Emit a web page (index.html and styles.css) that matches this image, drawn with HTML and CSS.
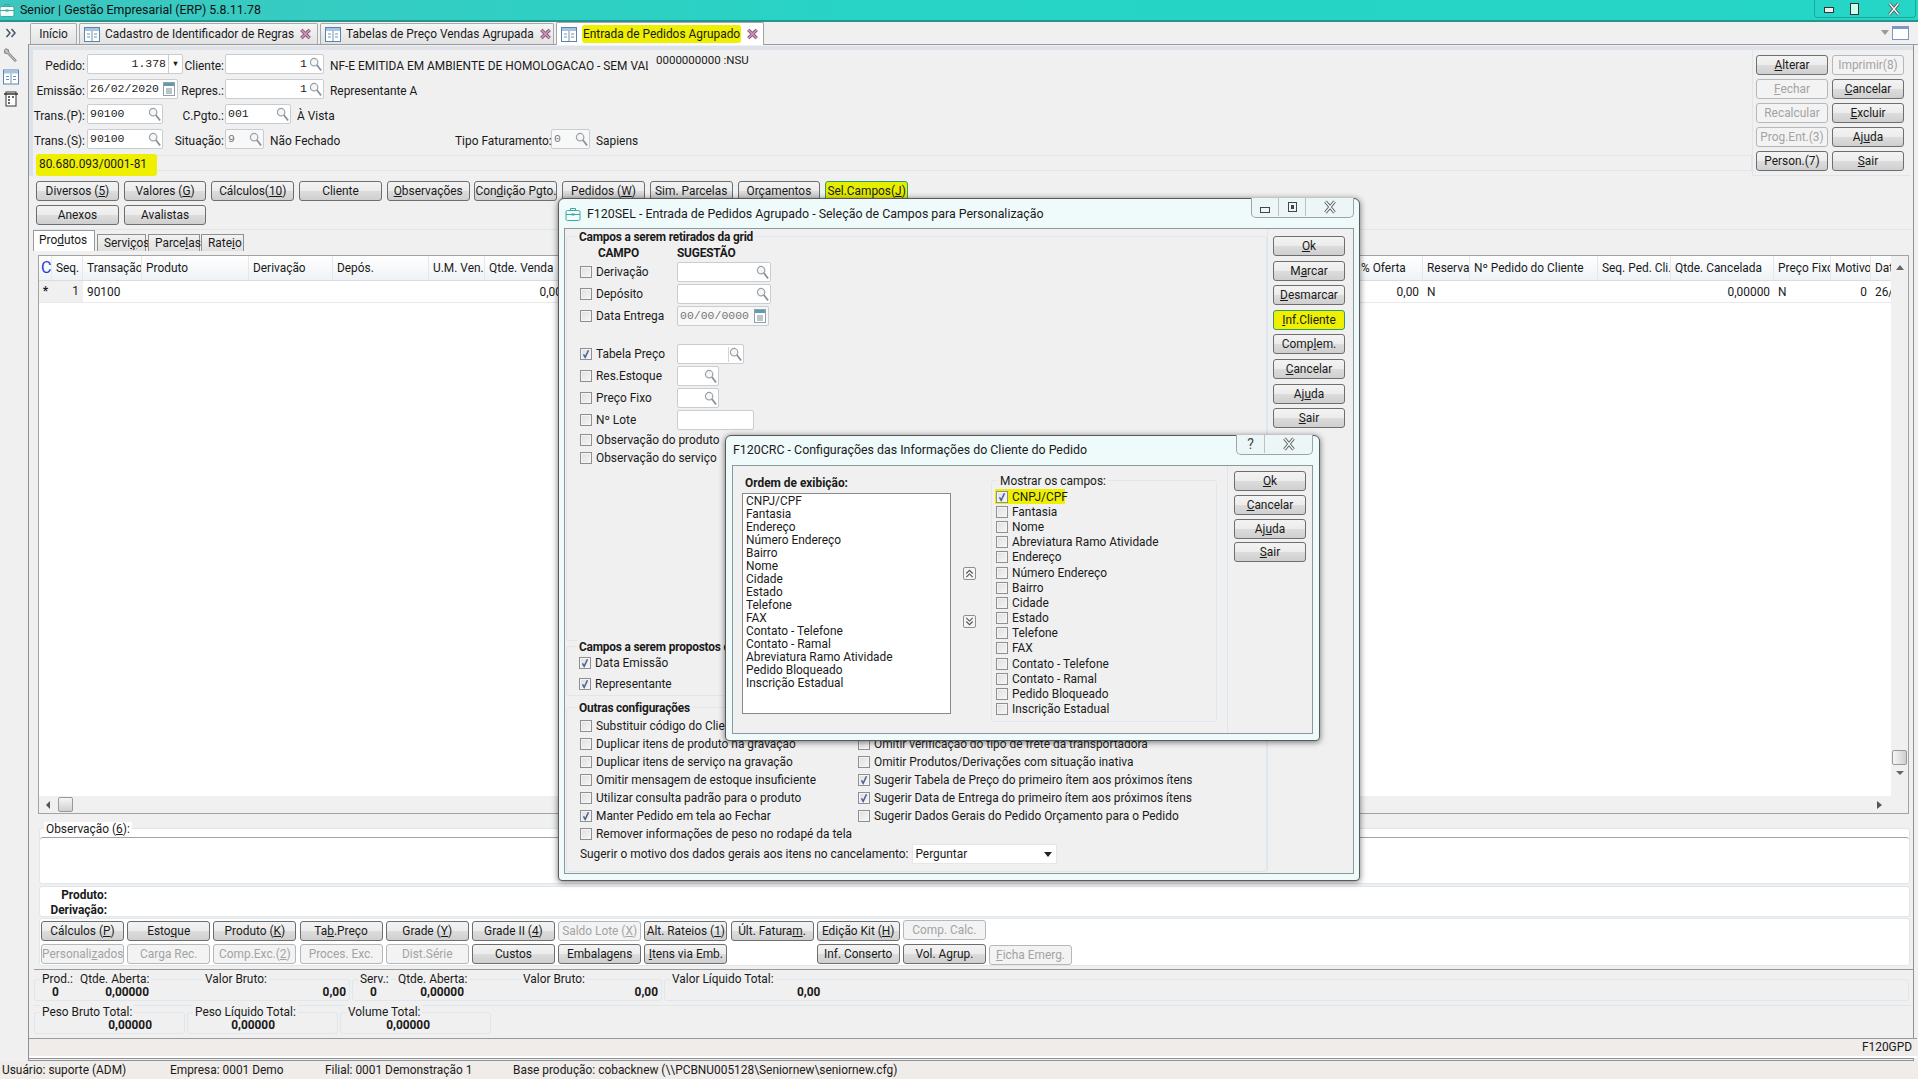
FILE: index.html
```html
<!DOCTYPE html>
<html lang="pt-BR">
<head>
  <meta charset="UTF-8" />
  <title>Senior | Gestão Empresarial (ERP) 5.8.11.78</title>
  <link rel="stylesheet" href="styles.css">
</head>
<body>

  <!-- shared icons -->
  <svg class="defs" width="0" height="0">
    <symbol id="i-search" viewBox="0 0 14 16">
      <circle cx="5.5" cy="5.5" r="4" fill="#f4f6f8" stroke="#9aa3a8" stroke-width="1.3"/>
      <path d="M8.5 8.5l4.5 6" stroke="#8a9297" stroke-width="2" fill="none"/>
    </symbol>
    <symbol id="i-cal" viewBox="0 0 12 14">
      <rect x=".5" y=".5" width="11" height="13" fill="#fff" stroke="#8fa3ad"/>
      <rect x="1" y="1" width="10" height="3" fill="#5f9cb0"/>
      <path d="M3 7h6M3 9h6M3 11h6" stroke="#7d8a90"/>
    </symbol>
    <symbol id="i-check" viewBox="0 0 12 12">
      <path d="M3 6.5l2 3.5 4-8.500" fill="none" stroke="#4a5f97" stroke-width="1.800"/>
    </symbol>
    <symbol id="i-close" viewBox="0 0 14 14">
      <path d="M2.500 2.500l9 9M11.500 2.500l-9 9" stroke="#6d5570" stroke-width="3.600" fill="none"/>
      <path d="M2.500 2.500l9 9M11.500 2.500l-9 9" stroke="#d58db5" stroke-width="1.800" fill="none"/>
    </symbol>
    <symbol id="i-x" viewBox="0 0 14 14">
      <path d="M2.500 1.500l9 11M11.500 1.500l-9 11" stroke="#555" stroke-width="3.200" fill="none"/>
      <path d="M2.500 1.500l9 11M11.500 1.500l-9 11" stroke="#f4f8f8" stroke-width="1.400" fill="none"/>
    </symbol>
    <symbol id="i-case" viewBox="0 0 16 14">
      <rect x="1" y="3.500" width="14" height="10" rx="1.500" fill="#f2fbfa" stroke="#3fa89c"/>
      <path d="M5.500 3.500V1.500h5v2M1 7.500h14" fill="none" stroke="#3fa89c"/>
      <rect x="6.500" y="6.500" width="3" height="2" fill="#3fa89c"/>
    </symbol>
    <symbol id="i-doc" viewBox="0 0 16 15">
      <rect x=".5" y=".5" width="15" height="14" fill="#fff" stroke="#5b84ad"/>
      <rect x="1" y="1" width="14" height="3" fill="#a6c4e0"/>
      <path d="M8 4v10M3 7h3M3 10h3M10 7h3M10 10h3" stroke="#6f90b3"/>
    </symbol>
  </svg>

  <header class="titlebar">
    <svg class="title-icon"><use href="#i-case"/></svg>
    <span class="title-text">Senior | Gestão Empresarial (ERP) 5.8.11.78</span>
    <div class="winbtns">
      <span class="wb-min"></span>
      <span class="wb-max"></span>
      <svg class="wb-x"><use href="#i-x"/></svg>
    </div>
  </header>

  <div class="workspace">
    <aside class="rail">
      <svg class="rail-more" viewBox="0 0 12 10"><path d="M1.500 1l3.500 4-3.500 4M6.500 1l3.500 4-3.500 4" fill="none" stroke="#44546a" stroke-width="1.500"/></svg>
      <svg class="rail-ico" viewBox="0 0 18 18"><path d="M3 2l3 1 .5 3L15 15l-1.500 1.500L5 7.500 2 7 1.500 4z" fill="#b9bfc3" stroke="#777"/></svg>
      <svg class="rail-ico"><use href="#i-doc"/></svg>
      <svg class="rail-ico" viewBox="0 0 16 16"><rect x="3" y="1" width="10" height="14" fill="#fff" stroke="#333"/><path d="M1 3h14M5 6h2M9 6h2M5 9h2M5 12h2" stroke="#333" stroke-width="1.400"/></svg>
    </aside>

    <div class="content">
      <nav class="tabs">
        <div class="tab tab-home">Início</div>
        <div class="tab tab-a"><svg class="tab-ico"><use href="#i-doc"/></svg><span>Cadastro de Identificador de Regras</span><svg class="tab-x"><use href="#i-close"/></svg></div>
        <div class="tab tab-b"><svg class="tab-ico"><use href="#i-doc"/></svg><span>Tabelas de Preço Vendas Agrupada</span><svg class="tab-x"><use href="#i-close"/></svg></div>
        <div class="tab tab-c active"><svg class="tab-ico"><use href="#i-doc"/></svg><span class="mark">Entrada de Pedidos Agrupado</span><svg class="tab-x"><use href="#i-close"/></svg></div>
        <div class="tab-tools"><span class="tool-arrow"></span><span class="tool-box"></span></div>
      </nav>

      <main class="panel">
        <section class="head">
          <div class="head-form">
            <div class="frow">
              <span class="l1">Pedido:</span>
              <div class="split">
                <div class="field w96 num"><span class="val right">1.378</span><span class="spin">▾</span></div>
                <span class="l2">Cliente:</span>
              </div>
              <div class="field w99 num"><span class="val right">1</span><svg class="lens"><use href="#i-search"/></svg></div>
              <span class="desc desc-nf">NF-E EMITIDA EM AMBIENTE DE HOMOLOGACAO - SEM VALOR</span>
              <span class="nsu">0000000000 :NSU</span>
            </div>
            <div class="frow">
              <span class="l1">Emissão:</span>
              <div class="split">
                <div class="field w91 num"><span class="val">26/02/2020</span><svg class="cal"><use href="#i-cal"/></svg></div>
                <span class="l2">Repres.:</span>
              </div>
              <div class="field w99 num"><span class="val right">1</span><svg class="lens"><use href="#i-search"/></svg></div>
              <span class="desc">Representante A</span>
            </div>
            <div class="frow">
              <span class="l1">Trans.(P):</span>
              <div class="split">
                <div class="field w76 num"><span class="val">90100</span><svg class="lens"><use href="#i-search"/></svg></div>
                <span class="l2">C.Pgto.:</span>
              </div>
              <div class="field w66 num"><span class="val">001</span><svg class="lens"><use href="#i-search"/></svg></div>
              <span class="desc">À Vista</span>
            </div>
            <div class="frow">
              <span class="l1">Trans.(S):</span>
              <div class="split">
                <div class="field w76 num"><span class="val">90100</span><svg class="lens"><use href="#i-search"/></svg></div>
                <span class="l2">Situação:</span>
              </div>
              <div class="field w39 num dim"><span class="val">9</span><svg class="lens"><use href="#i-search"/></svg></div>
              <span class="desc desc-sit">Não Fechado</span>
              <span class="tipo">Tipo Faturamento:</span>
              <div class="field w39 num dim"><span class="val">0</span><svg class="lens"><use href="#i-search"/></svg></div>
              <span class="desc">Sapiens</span>
            </div>
            <div class="cnpj-bar"><span class="mark cnpj">80.680.093/0001-81</span></div>
          </div>
          <div class="head-btns">
            <button class="btn"><u>A</u>lterar</button>
            <button class="btn off">Imprimir(8)</button>
            <button class="btn off"><u>F</u>echar</button>
            <button class="btn"><u>C</u>ancelar</button>
            <button class="btn off">Recalcular</button>
            <button class="btn"><u>E</u>xcluir</button>
            <button class="btn off">Prog.Ent.(3)</button>
            <button class="btn">Aj<u>u</u>da</button>
            <button class="btn">Person.(7)</button>
            <button class="btn"><u>S</u>air</button>
          </div>
        </section>

        <section class="actions">
          <div class="action-row">
            <button class="btn">Diversos (<u>5</u>)</button>
            <button class="btn">Valores (<u>G</u>)</button>
            <button class="btn">Cálculos(<u>10</u>)</button>
            <button class="btn">Cliente</button>
            <button class="btn"><u>O</u>bservações</button>
            <button class="btn">Con<u>d</u>ição Pgto.</button>
            <button class="btn">Pedidos (<u>W</u>)</button>
            <button class="btn">Sim. Parcelas</button>
            <button class="btn">Orçamentos</button>
            <button class="btn hot">Sel.Campos(<u>J</u>)</button>
          </div>
          <div class="action-row">
            <button class="btn">Anexos</button>
            <button class="btn">Avalistas</button>
          </div>
        </section>

        <div class="subtabs">
          <span class="subtab active">Pro<u>d</u>utos</span>
          <span class="subtab s2">Servi<u>ç</u>os</span>
          <span class="subtab s3">Parce<u>l</u>as</span>
          <span class="subtab s4">Rate<u>i</u>o</span>
        </div>

        <section class="grid">
          <div class="grid-top">
            <div class="table">
              <div class="trow thead">
                <span class="cc">C</span><span>Seq.</span><span>Transação</span><span>Produto</span><span>Derivação</span><span>Depós.</span><span>U.M. Ven.</span><span>Qtde. Venda</span><span></span><span>% Oferta</span><span>Reserva</span><span>Nº Pedido do Cliente</span><span>Seq. Ped. Cli.</span><span>Qtde. Cancelada</span><span>Preço Fixo</span><span>Motivo</span><span>Dat</span>
              </div>
              <div class="trow tbody">
                <span class="center gray">*</span><span class="r gray">1</span><span>90100</span><span></span><span></span><span></span><span></span><span class="r">0,00000</span><span></span><span class="r">0,00</span><span>N</span><span></span><span></span><span class="r">0,00000</span><span>N</span><span class="r">0</span><span>26/</span>
              </div>
            </div>
            <div class="vscroll">
              <span class="arr-up"></span>
              <span class="vthumb"></span>
              <span class="arr-down"></span>
            </div>
          </div>
          <div class="hscroll">
            <span class="arr-left"></span>
            <span class="hthumb"></span>
            <span class="arr-right"></span>
          </div>
        </section>

        <section class="obs grp-white">
          <div class="legend legend-white">Observação (<u>6</u>):</div>
          <div class="obs-box"></div>
        </section>

        <section class="prod grp-white">
          <div>Produto:</div>
          <div>Derivação:</div>
        </section>

        <section class="toolbar grp-white">
          <button class="btn">Cálculos (<u>P</u>)</button>
          <button class="btn"><span>Esto<u>q</u>ue</span></button>
          <button class="btn">Produto (<u>K</u>)</button>
          <button class="btn">Ta<u>b</u>.Preço</button>
          <button class="btn">Grade (<u>Y</u>)</button>
          <button class="btn">Grade II (<u>4</u>)</button>
          <button class="btn off">Saldo Lote (<u>X</u>)</button>
          <button class="btn">Alt. Rateios (<u>1</u>)</button>
          <button class="btn">Últ. Fatura<u>m</u>.</button>
          <button class="btn">Edição Kit (<u>H</u>)</button>
          <button class="btn off up">Comp. Calc.</button>
          <span></span>
          <button class="btn off">Personali<u>z</u>ados</button>
          <button class="btn off">Carga Rec.</button>
          <button class="btn off">Comp.Exc.(<u>2</u>)</button>
          <button class="btn off">Proces. Exc.</button>
          <button class="btn off">Dist.Série</button>
          <button class="btn">Custos</button>
          <button class="btn">Embalagens</button>
          <button class="btn"><u>I</u>tens via Emb.</button>
          <span></span>
          <button class="btn">Inf. Conserto</button>
          <button class="btn">Vol. Agrup.</button>
          <button class="btn off down"><u>F</u>icha Emerg.</button>
        </section>

        <section class="totals">
          <div class="tbox t-prod">
            <div class="legend">Prod.:</div><div class="legend l-q">Qtde. Aberta:</div><div class="legend l-v">Valor Bruto:</div>
            <b class="tv v-n">0</b><b class="tv v-q">0,00000</b><b class="tv v-b">0,00</b>
          </div>
          <div class="tbox t-serv">
            <div class="legend">Serv.:</div><div class="legend l-q">Qtde. Aberta:</div><div class="legend l-v">Valor Bruto:</div>
            <b class="tv v-n">0</b><b class="tv v-q">0,00000</b><b class="tv v-b">0,00</b>
          </div>
          <div class="tbox t-liq">
            <div class="legend">Valor Líquido Total:</div>
            <b class="tv v-liq">0,00</b>
          </div>
        </section>
        <section class="totals totals2">
          <div class="tbox t-peso"><div class="legend">Peso Bruto Total:</div><b class="tv">0,00000</b></div>
          <div class="tbox t-peso"><div class="legend">Peso Líquido Total:</div><b class="tv">0,00000</b></div>
          <div class="tbox t-peso"><div class="legend">Volume Total:</div><b class="tv">0,00000</b></div>
        </section>

        <div class="form-code">F120GPD</div>
      </main>
    </div>
  </div>

  <footer class="statusbar">
    <span class="s-user">Usuário: suporte (ADM)</span>
    <span class="s-emp">Empresa: 0001 Demo</span>
    <span class="s-fil">Filial: 0001 Demonstração 1</span>
    <span>Base produção: cobacknew (\\PCBNU005128\Seniornew\seniornew.cfg)</span>
  </footer>

  <!-- F120SEL window -->
  <div class="dialog dlg-sel">
    <div class="dlg-title">
      <svg class="title-icon"><use href="#i-case"/></svg>
      <span>F120SEL - Entrada de Pedidos Agrupado - Seleção de Campos para Personalização</span>
      <div class="dlg-btns">
        <span class="db db-min"><i></i></span>
        <span class="db db-max"><i></i></span>
        <span class="db db-x"><svg><use href="#i-x"/></svg></span>
      </div>
    </div>
    <div class="dlg-body">
      <div class="sel-left">
        <div class="grp g-campos">
          <div class="legend bold">Campos a serem retirados da grid</div>
          <div class="campo-head"><b>CAMPO</b><b>SUGESTÃO</b></div>
          <div class="crow"><label class="opt"><span class="chk"></span>Derivação</label><div class="field w94"><svg class="lens"><use href="#i-search"/></svg></div></div>
          <div class="crow"><label class="opt"><span class="chk"></span>Depósito</label><div class="field w94"><svg class="lens"><use href="#i-search"/></svg></div></div>
          <div class="crow"><label class="opt"><span class="chk"></span>Data Entrega</label><div class="field w92 num dim"><span class="val">00/00/0000</span><svg class="cal"><use href="#i-cal"/></svg></div></div>
          <div class="crow gap-top"><label class="opt"><span class="chk on"><svg><use href="#i-check"/></svg></span>Tabela Preço</label><div class="field w67"><span class="val"></span><svg class="lens sep"><use href="#i-search"/></svg></div></div>
          <div class="crow"><label class="opt"><span class="chk"></span>Res.Estoque</label><div class="field w42"><svg class="lens"><use href="#i-search"/></svg></div></div>
          <div class="crow"><label class="opt"><span class="chk"></span>Preço Fixo</label><div class="field w42"><svg class="lens"><use href="#i-search"/></svg></div></div>
          <div class="crow"><label class="opt"><span class="chk"></span>Nº Lote</label><div class="field w77"></div></div>
          <div class="crow short"><label class="opt"><span class="chk"></span>Observação do produto</label></div>
          <div class="crow short"><label class="opt"><span class="chk"></span>Observação do serviço</label></div>
        </div>
        <div class="grp g-prop">
          <div class="legend bold">Campos a serem propostos c</div>
          <div class="prow"><label class="opt"><span class="chk on"><svg><use href="#i-check"/></svg></span>Data Emissão</label></div>
          <div class="prow"><label class="opt"><span class="chk on"><svg><use href="#i-check"/></svg></span>Representante</label></div>
        </div>
        <div class="grp g-outras">
          <div class="legend bold">Outras configurações</div>
          <div class="out-grid">
            <label class="opt"><span class="chk"></span>Substituir código do Clie</label><span></span>
            <label class="opt"><span class="chk"></span>Duplicar itens de produto na gravação</label>
            <label class="opt"><span class="chk"></span>Omitir verificação do tipo de frete da transportadora</label>
            <label class="opt"><span class="chk"></span>Duplicar itens de serviço na gravação</label>
            <label class="opt"><span class="chk"></span>Omitir Produtos/Derivações com situação inativa</label>
            <label class="opt"><span class="chk"></span>Omitir mensagem de estoque insuficiente</label>
            <label class="opt"><span class="chk on"><svg><use href="#i-check"/></svg></span>Sugerir Tabela de Preço do primeiro ítem aos próximos ítens</label>
            <label class="opt"><span class="chk"></span>Utilizar consulta padrão para o produto</label>
            <label class="opt"><span class="chk on"><svg><use href="#i-check"/></svg></span>Sugerir Data de Entrega do primeiro ítem aos próximos ítens</label>
            <label class="opt"><span class="chk on"><svg><use href="#i-check"/></svg></span>Manter Pedido em tela ao Fechar</label>
            <label class="opt"><span class="chk"></span>Sugerir Dados Gerais do Pedido Orçamento para o Pedido</label>
            <label class="opt"><span class="chk"></span>Remover informações de peso no rodapé da tela</label><span></span>
          </div>
          <div class="motivo">
            <span>Sugerir o motivo dos dados gerais aos itens no cancelamento:</span>
            <div class="select"><span>Perguntar</span><i class="caret"></i></div>
          </div>
        </div>
      </div>
      <div class="sel-right">
        <button class="btn"><u>O</u>k</button>
        <button class="btn">M<u>a</u>rcar</button>
        <button class="btn"><u>D</u>esmarcar</button>
        <button class="btn hot2"><u>I</u>nf.Cliente</button>
        <button class="btn">Comp<u>l</u>em.</button>
        <button class="btn"><u>C</u>ancelar</button>
        <button class="btn">Aj<u>u</u>da</button>
        <button class="btn"><u>S</u>air</button>
      </div>
    </div>
  </div>

  <!-- F120CRC window -->
  <div class="dialog dlg-crc">
    <div class="dlg-title crc-title">
      <span>F120CRC - Configurações das Informações do Cliente do Pedido</span>
      <div class="dlg-btns">
        <span class="db db-help">?</span>
        <span class="db db-x"><svg><use href="#i-x"/></svg></span>
      </div>
    </div>
    <div class="dlg-body">
      <div class="crc-left">
        <div class="ordem">
          <b class="ordem-title">Ordem de exibição:</b>
          <div class="listbox">
            <div>CNPJ/CPF</div><div>Fantasia</div><div>Endereço</div><div>Número Endereço</div><div>Bairro</div><div>Nome</div><div>Cidade</div><div>Estado</div><div>Telefone</div><div>FAX</div><div>Contato - Telefone</div><div>Contato - Ramal</div><div>Abreviatura Ramo Atividade</div><div>Pedido Bloqueado</div><div>Inscrição Estadual</div>
          </div>
        </div>
        <div class="movers">
          <span class="mover"><svg viewBox="0 0 12 12"><path d="M2.500 6l3.500-3.500L9.500 6M2.500 10L6 6.500 9.500 10" fill="none" stroke="#555" stroke-width="1.200"/></svg></span>
          <span class="mover"><svg viewBox="0 0 12 12"><path d="M2.500 2l3.500 3.500L9.500 2M2.500 6L6 9.500 9.500 6" fill="none" stroke="#555" stroke-width="1.200"/></svg></span>
        </div>
        <div class="grp g-mostrar">
          <div class="legend">Mostrar os campos:</div>
          <label class="opt hl-opt"><span class="chk on"><svg><use href="#i-check"/></svg></span>CNPJ/CPF</label>
          <label class="opt"><span class="chk"></span>Fantasia</label>
          <label class="opt"><span class="chk"></span>Nome</label>
          <label class="opt"><span class="chk"></span>Abreviatura Ramo Atividade</label>
          <label class="opt"><span class="chk"></span>Endereço</label>
          <label class="opt"><span class="chk"></span>Número Endereço</label>
          <label class="opt"><span class="chk"></span>Bairro</label>
          <label class="opt"><span class="chk"></span>Cidade</label>
          <label class="opt"><span class="chk"></span>Estado</label>
          <label class="opt"><span class="chk"></span>Telefone</label>
          <label class="opt"><span class="chk"></span>FAX</label>
          <label class="opt"><span class="chk"></span>Contato - Telefone</label>
          <label class="opt"><span class="chk"></span>Contato - Ramal</label>
          <label class="opt"><span class="chk"></span>Pedido Bloqueado</label>
          <label class="opt"><span class="chk"></span>Inscrição Estadual</label>
        </div>
      </div>
      <div class="crc-right">
        <button class="btn"><u>O</u>k</button>
        <button class="btn"><u>C</u>ancelar</button>
        <button class="btn">Aj<u>u</u>da</button>
        <button class="btn"><u>S</u>air</button>
      </div>
    </div>
  </div>

</body>
</html>
```

FILE: styles.css
```css
* { margin: 0; padding: 0; box-sizing: border-box; }

body {
  width: 1918px;
  height: 1079px;
  overflow: hidden;
  position: relative;
  display: flex;
  flex-direction: column;
  font-family: Roboto, "Noto Sans", sans-serif;
  font-size: 11.900px;
  line-height: 14px;
  color: #1a1a1a;
  background: #f0f0f0;
}

.defs { position: absolute; }

/* title bar */
.titlebar {
  height: 22px;
  flex: none;
  display: flex;
  align-items: center;
  background: linear-gradient(90deg, #3cc6bf 0%, #34cdc3 20%, #27d4c5 45%, #25d5c5 100%);
  border-bottom: 2px solid #25958d;
  color: #111;
  position: relative;
}

.title-icon { width: 16px; height: 14px; flex: none; }
.titlebar .title-icon { margin: 0 5px 0 -1px; }
.title-text { font-size: 12.400px; }

.winbtns {
  position: absolute;
  top: 0;
  right: 2px;
  width: 102px;
  height: 18px;
  border: 1px solid #1ea79c;
  border-top: 0;
  border-radius: 0 0 4px 4px;
  display: flex;
  align-items: center;
}

.wb-min { width: 10px; height: 6px; margin: 3px 0 0 9px; border: 1px solid #333; background: #eee; }
.wb-max { width: 9px; height: 12px; margin-left: 16px; border: 1px solid #333; background: #cfe; }
.wb-x { width: 14px; height: 14px; margin-left: 28px; }

.workspace { flex: 1; display: flex; min-height: 0; }

.rail {
  width: 28px;
  flex: none;
  display: flex;
  flex-direction: column;
  align-items: flex-start;
  padding-left: 3px;
}

.rail-more { width: 12px; height: 10px; margin: 6px 0 9px 2px; }
.rail-ico { width: 16px; height: 16px; margin-bottom: 6px; }

.content { flex: 1; display: flex; flex-direction: column; min-width: 0; }

/* top tabs */
.tabs {
  height: 23px;
  flex: none;
  display: flex;
  align-items: flex-end;
  padding-left: 2px;
  border-bottom: 1px solid #9a9a9a;
  position: relative;
}

.tab {
  height: 21px;
  display: flex;
  align-items: center;
  gap: 5px;
  margin-right: 2px;
  background: linear-gradient(#f6f6f6, #e2e2e2);
  border: 1px solid #a9a9a9;
  border-bottom: 0;
  border-radius: 2px 2px 0 0;
  padding: 0 6px 0 4px;
  white-space: nowrap;
}

.tab-home { width: 47px; justify-content: center; padding: 0; }
.tab-a { width: 239px; }
.tab-b { width: 234px; }
.tab-c { width: 208px; }

.tab.active {
  height: 23px;
  background: #fff;
  margin-bottom: -1px;
  border-color: #a5a5a5;
}

.tab-ico { width: 16px; height: 15px; flex: none; }
.tab-x { width: 13px; height: 14px; flex: none; margin-left: auto; }

.mark { background: #eef000; border-radius: 3px; }
.tab-c .mark { padding: 2px 1px; }

.tab-tools { margin-left: auto; display: flex; align-items: center; align-self: center; padding-right: 9px; }
.tool-arrow { width: 0; height: 0; border: 4px solid transparent; border-top: 5px solid #999; margin: 3px 3px 0 0; }
.tool-box { width: 17px; height: 14px; background: #fff; border: 1px solid #7d96c8; border-top: 3px solid #7d96c8; }

/* main area */
.panel {
  flex: 1;
  margin-right: 4px;
  border-left: 1px solid #8e9296;
  border-right: 1px solid #8e9296;
  border-bottom: 3px double #8e9296;
  padding: 1px 0 0 4px;
  display: flex;
  flex-direction: column;
  min-height: 0;
}

.head {
  height: 130px;
  flex: none;
  display: flex;
  margin-left: -4px;
  border-top: 4px solid #dde3e8;
  border-left: 4px solid #dde3e8;
}

.head-form { width: 1719px; padding: 4px 0 0 0; display: flex; flex-direction: column; }

.frow { height: 20px; margin-bottom: 5px; display: flex; align-items: center; position: relative; }
.frow span { white-space: nowrap; }

.l1 { width: 53px; padding: 4px 1px 0 0; text-align: right; flex: none; }
.l2 { padding-top: 4px; }
.split { width: 138px; flex: none; display: flex; justify-content: space-between; align-items: center; padding-right: 1px; margin-left: 1px; }

.field {
  height: 20px;
  flex: none;
  display: flex;
  align-items: center;
  background: #fff;
  border: 1px solid #c8cdd1;
  border-radius: 2px;
}

.w96 { width: 96px; }
.w91 { width: 91px; }
.w99 { width: 99px; }
.w76 { width: 76px; }
.w66 { width: 66px; }
.w39 { width: 39px; }
.w94 { width: 94px; }
.w92 { width: 92px; }
.w67 { width: 67px; }
.w42 { width: 42px; }
.w77 { width: 77px; }

.num { font-family: "Liberation Mono", monospace; font-size: 11.500px; }
.num .val { padding-bottom: 1px; }
.dim { color: #777; background: #f8f8f8; }
.val { flex: 1; padding-left: 2px; }
.val.right { text-align: right; padding-right: 2px; }

.spin { width: 14px; text-align: center; border-left: 1px solid #ccc; height: 18px; line-height: 17px; }
.lens { width: 13px; height: 15px; flex: none; margin-left: auto; margin-right: 1px; }
.lens.sep { border-left: 1px solid #d5d5d5; width: 14px; }
.cal { width: 12px; height: 14px; flex: none; margin: 0 2px 0 auto; }

.desc { margin-left: 6px; padding-top: 4px; }
.desc-nf { width: 318px; overflow: hidden; }
.nsu { font-size: 11.500px; margin: -9px 0 0 8px; }
.desc-sit { width: 185px; }
.tipo { width: 95px; text-align: right; margin-right: 1px; padding-top: 4px; }

.cnpj-bar {
  height: 16px;
  margin: 1px 0 0 3px;
  border-top: 1px solid #dfe5ea;
  border-bottom: 1px solid #dfe5ea;
  border-right: 1px solid #dfe5ea;
  display: flex;
  align-items: center;
}
.cnpj { padding: 3px 10px 5px 3px; margin-top: 3px; }

.head-btns {
  width: 158px;
  margin-left: 0;
  display: grid;
  grid-template-columns: 72px 72px;
  grid-auto-rows: 20px;
  gap: 4px 4px;
  padding: 5px 0 0 3px;
  border-left: 1px solid #dfe5ea;
  border-bottom: 1px solid #dfe5ea;
}

.btn {
  height: 20px;
  font: inherit;
  color: #1a1a1a;
  border: 1px solid #6e6e6e;
  border-radius: 3px;
  background: linear-gradient(#f3f3f3 0%, #ececec 48%, #dcdcdc 52%, #cfcfcf 100%);
  white-space: nowrap;
  overflow: hidden;
}
.btn.off { color: #a3a3a3; border-color: #b4b8ba; background: #f3f3f3; }

.actions { height: 54px; flex: none; padding: 5px 0 0 3px; border-bottom: 1px solid #dfe5ea; }
.action-row { display: grid; grid-template-columns: repeat(10, 82.800px); column-gap: 4.900px; margin-bottom: 4px; }
.btn.hot { background: #e6ee00; border-color: #2f9d6a; }

.subtabs { height: 21px; flex: none; display: flex; align-items: flex-end; margin-bottom: 4px; }
.subtab { border: 1px solid #909090; border-bottom: 0; background: linear-gradient(#f2f2f2, #e0e0e0); height: 17px; margin-left: 1px; padding: 1px 0 0 6px; }
.subtab.active { width: 62px; height: 21px; margin: 0 1px 0 0; background: #fff; border-color: #9a9a9a; padding: 2px 0 0 5px; }
.s2 { width: 49px; }
.s3 { width: 52px; margin-left: 2px; }
.s4 { width: 43px; }

/* grid */
.grid {
  height: 559px;
  flex: none;
  margin-left: 5px;
  width: 1871px;
  border: 1px solid #a3a3a3;
  display: flex;
  flex-direction: column;
}

.grid-top { flex: 1; display: flex; min-height: 0; }
.table { flex: 1; background: #fff; min-width: 0; }

.trow {
  display: grid;
  grid-template-columns: 13px 31px 59px 107px 84px 96px 56px 101px 771px 66px 47px 128px 73px 103px 57px 40px 22px;
  overflow: hidden;
}
.trow span { padding-left: 4px; white-space: nowrap; overflow: hidden; }

.thead { height: 25px; align-items: center; background: linear-gradient(#fff, #eff3f6); border-bottom: 1px solid #d8dde1; }
.thead span { height: 24px; line-height: 24px; border-right: 1px solid #e4e8eb; }
.thead .cc { color: #1a3fd8; font-size: 16px; padding-left: 2px; }

.tbody { height: 22px; align-items: center; border-bottom: 1px solid #e9e9e9; }
.tbody .r { text-align: right; padding: 0 4px 0 0; }
.tbody .center { text-align: center; padding: 0; font-weight: 700; }
.tbody .gray { background: #f0f0f0; height: 21px; line-height: 21px; }

.vscroll { width: 17px; flex: none; background: #f0f0f0; position: relative; display: flex; flex-direction: column; align-items: center; }
.arr-up { width: 0; height: 0; margin-top: 9px; border: 4px solid transparent; border-bottom: 5px solid #666; border-top: 0; }
.vthumb { width: 15px; height: 15px; margin-top: auto; margin-bottom: 6px; border: 1px solid #999; border-radius: 2px; background: linear-gradient(90deg, #f6f6f6, #cfcfcf); }
.arr-down { width: 0; height: 0; margin-bottom: 21px; border: 4px solid transparent; border-top: 4px solid #666; border-bottom: 0; }

.hscroll { height: 17px; flex: none; background: #f0f0f0; display: flex; align-items: center; padding: 0 26px 0 7px; }
.arr-left { width: 0; height: 0; border: 4px solid transparent; border-right: 4px solid #555; border-left: 0; }
.hthumb { width: 15px; height: 15px; margin-left: 8px; border: 1px solid #999; border-radius: 2px; background: linear-gradient(#f6f6f6, #cfcfcf); }
.arr-right { width: 0; height: 0; margin-left: auto; border: 4px solid transparent; border-left: 5px solid #555; border-right: 0; }

/* groups */
.legend { display: table; margin: -7px 0 0 6px; padding: 0 2px; background: #f0f0f0; white-space: nowrap; }
.legend.bold { font-weight: 700; letter-spacing: -.2px; }
.legend-white { background: #fff; margin-left: 4px; }

.grp { border: 1px solid #dfe6ec; border-radius: 3px; }

.grp-white { background: #fff; border: 1px solid #dfe6ec; border-radius: 3px; margin-left: 6px; width: 1871px; flex: none; }

.obs { height: 56px; margin-top: 14px; }
.obs-box { height: 47px; margin: 1px 0 0 0; border-top: 1px solid #a3a3a3; border-radius: 3px; }

.prod { height: 31px; margin-top: 2px; font-weight: 700; text-align: right; }
.prod div { width: 67px; height: 14px; margin-top: 1px; }

.toolbar {
  height: 48px;
  margin-top: 1px;
  padding: 2px 0 0 1px;
  display: grid;
  grid-template-columns: repeat(12, 83px);
  column-gap: 3.200px;
  row-gap: 3px;
  grid-auto-rows: 20px;
  border-bottom: 1px solid #dfe6ec;
}
.btn.up { margin-top: -1px; }
.btn.down { margin-top: 1px; }

.totals {
  display: flex;
  flex: none;
  height: 36px;
  margin: 3px 0 0 1px;
  padding-top: 9px;
  border-top: 1px solid #9a9a9a;
  gap: 2px;
}
.totals2 { height: 32px; margin-top: 0; padding-top: 6px; border-top: 1px solid #dfe6ec; }

.tbox { border: 1px solid #dfe6ec; border-radius: 3px; height: 22px; position: relative; }
.totals .tbox .legend { position: absolute; top: -8px; left: 0; margin: 0 0 0 5px; line-height: 14px; }
.totals .tbox .l-q { left: 43px; margin: 0; }
.totals .tbox .l-v { left: 168px; margin: 0; }
.t-prod { width: 316px; }
.t-serv { width: 310px; }
.t-liq { width: 1245px; }
.t-peso { width: 151px; }

.tv { position: absolute; top: 5px; font-weight: 700; }
.v-n { left: 17px; }
.v-q { right: 200px; }
.v-b { right: 3px; }
.t-serv .v-q { right: 197px; }
.v-liq { left: 132px; }
.t-peso .tv { right: 32px; }
.t-peso + .t-peso .tv { right: 62px; }
.t-peso + .t-peso + .t-peso .tv { right: 60px; }

.form-code {
  flex: none;
  margin: 1px -4px 0 -4px;
  height: 20px;
  background: #efecea;
  border-top: 1px solid #9a9a9a;
  border-bottom: 2px solid #fff;
  text-align: right;
  padding-right: 5px;
  line-height: 17px;
}

.statusbar {
  height: 18px;
  flex: none;
  display: flex;
  background: #efecea;
  padding: 1px 0 0 2px;
  line-height: 17px;
}
.s-user { width: 168px; }
.s-emp { width: 155px; }
.s-fil { width: 188px; }

/* dialogs */
.dialog {
  position: absolute;
  background: #effafb;
  border: 1px solid #5a5a5a;
  border-radius: 6px 6px 4px 4px;
  box-shadow: 0 1px 6px rgba(0, 0, 0, .55);
  padding: 0 5px 6px;
  display: flex;
  flex-direction: column;
}

.dlg-sel { left: 558px; top: 198px; width: 802px; height: 683px; }
.dlg-crc { left: 725px; top: 435px; width: 595px; height: 306px; padding: 0 6px 6px; }

.dlg-title {
  height: 29px;
  flex: none;
  display: flex;
  align-items: center;
  gap: 6px;
  font-size: 12.400px;
  position: relative;
  padding-left: 1px;
}

.crc-title { padding-bottom: 2px; }

.dlg-btns {
  position: absolute;
  top: -1px;
  right: 0;
  height: 20px;
  display: flex;
  border: 1px solid #9aa5a9;
  border-top: 0;
  border-radius: 0 0 5px 5px;
  background: #edf6f7;
}

.db { display: flex; align-items: center; justify-content: center; border-right: 1px solid #b9c3c6; height: 18px; }
.db:last-child { border-right: 0; }
.db-min { width: 27px; }
.db-min i { width: 10px; height: 6px; margin-top: 5px; border: 1px solid #444; }
.db-max { width: 27px; }
.db-max i { width: 9px; height: 10px; border: 1px solid #444; box-shadow: inset 0 0 0 2px #edf6f7, inset 0 0 0 4px #444; }
.db-x { width: 47px; }
.db-x svg { width: 14px; height: 14px; }
.db-help { width: 28px; font-size: 14px; color: #444; }
.dlg-crc .db-x { width: 47px; }

.dlg-body {
  flex: 1;
  min-height: 0;
  display: flex;
  background: #f0f0f0;
  border: 1px solid #8d979c;
}

.sel-left { width: 703px; flex: none; padding: 7px 0 0 1px; border-right: 1px solid #dfe6ec; display: flex; flex-direction: column; }

.g-campos { height: 405px; }
.g-campos .legend { margin-left: 10px; }
.campo-head { display: flex; height: 15px; margin-top: 2px; padding-left: 31px; }
.campo-head b { width: 79px; letter-spacing: -.2px; }

.crow { height: 22px; display: flex; align-items: center; padding-left: 13px; }
.crow .opt { width: 97px; flex: none; }
.gap-top { margin-top: 16px; }
.crow.short { height: 18px; }
.crow.short .opt { width: 200px; }

.opt { display: flex; align-items: center; gap: 4px; white-space: nowrap; }

.chk {
  width: 12px;
  height: 12px;
  flex: none;
  border: 1px solid #8d8f90;
  background: linear-gradient(135deg, #dfdfdf, #f6f6f6);
  display: block;
  box-shadow: inset 0 0 0 1px #f4f4f4;
}
.chk svg { width: 10px; height: 10px; display: block; }

.g-prop { height: 50px; margin-top: 5px; padding-left: 12px; }
.g-prop .legend { margin-left: -2px; }
.prow { height: 21px; display: flex; align-items: center; }
.g-prop .legend + .prow { margin-top: -2px; }

.g-outras { flex: 1; margin-top: 11px; margin-bottom: 1px; padding-left: 13px; }
.g-outras .legend { margin-left: -3px; }
.out-grid { display: grid; grid-template-columns: 278px 1fr; grid-auto-rows: 18px; align-items: center; margin-top: 2px; }

.motivo { display: flex; align-items: center; gap: 4px; margin-top: 1px; height: 20px; }
.select { width: 145px; height: 20px; display: flex; align-items: center; justify-content: space-between; background: #fff; border: 1px solid #e6e6e6; padding: 0 4px 0 2px; }
.caret { width: 0; height: 0; border: 4px solid transparent; border-top: 5px solid #222; border-bottom: 0; }

.sel-right { flex: 1; padding: 7px 0 0 5px; display: flex; flex-direction: column; gap: 4.600px; align-items: flex-start; }
.sel-right .btn, .crc-right .btn { width: 72px; flex: none; }
.btn.hot2 { background: #eef000; border-color: #2f9d6a; }

.crc-left { width: 495px; flex: none; display: flex; border-right: 1px solid #dfe6ec; padding: 10px 0 0 9px; }
.ordem { width: 209px; flex: none; }
.ordem-title { display: block; height: 17px; padding-left: 3px; }
.listbox { height: 221px; background: #fff; border: 1px solid #8a8a8a; padding: 1px 3px; line-height: 13px; }
.listbox div { height: 13px; white-space: nowrap; }

.movers { width: 40px; flex: none; display: flex; flex-direction: column; align-items: center; padding: 91px 0 0 0; gap: 35px; }
.mover { width: 13px; height: 13px; border: 1px solid #8f8f8f; border-radius: 2px; background: #f4f4f4; display: block; margin-left: -4px; }
.mover svg { display: block; width: 11px; height: 11px; }

.g-mostrar { width: 226px; height: 242px; margin-top: 4px; padding-left: 4px; }
.g-mostrar .legend { margin-left: 2px; }
.g-mostrar .opt { height: 15.200px; }
.g-mostrar .hl-opt { width: 70px; height: 15.200px; margin: 1px 0 0 -1px; padding-left: 1px; background: #eef000; }

.crc-right { flex: 1; padding: 5px 0 0 6px; display: flex; flex-direction: column; gap: 3.800px; }
```
